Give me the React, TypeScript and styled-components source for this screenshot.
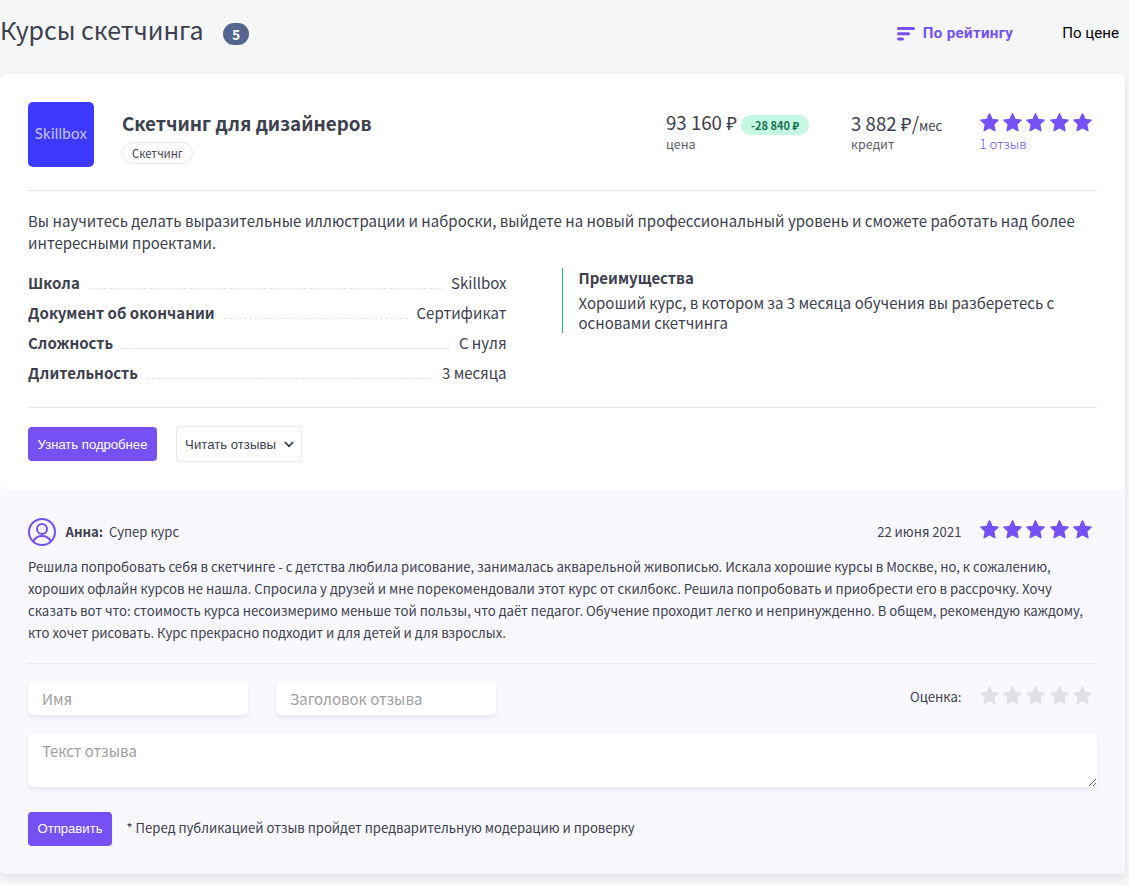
import React from 'react';
import styled, { createGlobalStyle } from 'styled-components';

const SANS = '"Noto Sans CJK SC", "Noto Sans", sans-serif';
const ARIAL = '"Liberation Sans", Arial, sans-serif';
const ACCENT = '#7551f5';
const TEXT = '#3d404e';

const GlobalStyle = createGlobalStyle`
  * { box-sizing: border-box; }
  body {
    margin: 0;
    background: #f4f6f8;
    color: ${TEXT};
    font-family: ${SANS};
    font-size: 15px;
    overflow: hidden;
  }
  h1, h2, h3, p, dl, dd, dt { margin: 0; }
  button, input, textarea { font: inherit; border: 0; margin: 0; outline: none; }
`;

const Page = styled.main`
  width: 1129px;
  height: 885px;
  overflow: hidden;
`;

const TopBar = styled.header`
  display: flex;
  align-items: center;
  height: 74px;
  padding: 0 10px 12px 0;
`;

const PageTitle = styled.h1`
  margin-bottom: 4px;
  font-weight: 400;
  font-size: 24.9px;
  line-height: 36px;
  white-space: nowrap;
`;

const Count = styled.span`
  margin: 6px 0 0 19.5px;
  width: 26px;
  height: 22px;
  border-radius: 11px;
  background: #54658f;
  color: #fff;
  font-weight: 700;
  font-size: 14px;
  line-height: 23px;
  text-align: center;
`;

const SortBar = styled.nav`
  display: flex;
  align-items: center;
  gap: 49px;
  margin-left: auto;
  padding-top: 5px;
`;

const SortOption = styled.span<{ $active?: boolean }>`
  display: flex;
  align-items: center;
  gap: 8px;
  font-family: Roboto, sans-serif;
  font-size: 15.1px;
  letter-spacing: ${p => (p.$active ? 0.32 : 0)}px;
  font-weight: ${p => (p.$active ? 700 : 400)};
  line-height: 20px;
  color: ${p => (p.$active ? ACCENT : '#000')};
`;

const SortLabel = styled.span`
  padding-bottom: 2px;
`;

const Panel = styled.section`
  width: 1125px;
  border-radius: 6px;
  box-shadow: 0 3px 8px rgba(40, 45, 60, 0.1);
`;

const Course = styled.article`
  height: 416px;
  padding: 28px 28px 0;
  background: #fff;
  border-radius: 6px;
`;

const Reviews = styled.section`
  height: 384px;
  padding: 28px 28px 0;
  background: #f9f8ff;
  border-radius: 0 0 6px 6px;
`;

const CourseHead = styled.div`
  display: flex;
  height: 89px;
  border-bottom: 1px solid #e8e8ea;
`;

const Logo = styled.div`
  display: flex;
  align-items: center;
  justify-content: center;
  width: 66px;
  height: 65px;
  padding-bottom: 3px;
  border-radius: 5px;
  background: #3e39ff;
  color: #c6c4ff;
  font-family: Lato, sans-serif;
  font-size: 15px;
  letter-spacing: 0.25px;
`;

const CourseName = styled.div`
  width: 572px;
  padding: 7px 0 0 28px;
`;

const CourseTitle = styled.h2`
  font-weight: 700;
  font-size: 18.75px;
  line-height: 28px;
`;

const Chip = styled.span`
  display: block;
  width: 71px;
  height: 22px;
  margin-top: 5px;
  border: 1px solid #e8e8ea;
  border-radius: 11px;
  font-size: 11.3px;
  line-height: 20px;
  text-align: center;
`;

const Cost = styled.div<{ $width: number }>`
  width: ${p => p.$width}px;
  padding-top: 7px;
`;

const Amount = styled.div<{ $raised?: boolean }>`
  display: flex;
  align-items: baseline;
  font-size: 18.67px;
  line-height: ${p => (p.$raised ? 26 : 28)}px;
  height: 26px;
  white-space: nowrap;
`;

const Unit = styled.span`
  font-size: 13.1px;
`;

const Discount = styled.span`
  align-self: center;
  margin: 5px 0 0 4px;
  width: 68px;
  height: 20px;
  border-radius: 10px;
  background: #c6f7e2;
  color: #147350;
  font-weight: 700;
  font-size: 11px;
  line-height: 20px;
  text-align: center;
`;

const Caption = styled.div<{ $link?: boolean }>`
  margin-top: ${p => (p.$link ? 3 : 0)}px;
  font-size: ${p => (p.$link ? 13.15 : 12.5)}px;
  font-weight: ${p => (p.$link ? 300 : 400)};
  line-height: 18px;
  color: ${p => (p.$link ? ACCENT : '#5d606c')};
`;

const Rating = styled.div`
  padding: 11px 0 0 0.6px;
`;

const StarRow = styled.div`
  display: flex;
  gap: 4.35px;
  height: 19px;
`;

const Description = styled.p`
  margin-top: 19px;
  line-height: 22px;
  height: 44px;
`;

const Details = styled.div`
  display: flex;
  align-items: flex-start;
  justify-content: space-between;
  height: 154px;
  padding-top: 14px;
  border-bottom: 1px solid #e8e8ea;
`;

const Facts = styled.dl`
  width: 478.5px;
`;

const Fact = styled.div`
  display: flex;
  line-height: 30px;
  height: 30px;
`;

const FactName = styled.dt`
  font-weight: 700;
`;

const Leader = styled.span`
  flex: 1;
  height: 21px;
  margin: 0 9px;
  border-bottom: 1px dashed #e3e4e7;
`;

const Benefits = styled.div`
  width: 535px;
  height: 65px;
  padding-left: 15.5px;
  border-left: 1px solid #25b885;
  line-height: 20px;
`;

const BenefitsTitle = styled.h3`
  font-size: 15px;
  line-height: 20px;
  margin-bottom: 5px;
`;

const Actions = styled.div`
  display: flex;
  align-items: center;
  gap: 19px;
  padding-top: 18px;
`;

const PrimaryButton = styled.button<{ $width: number }>`
  width: ${p => p.$width}px;
  height: 34px;
  padding: ${p => (p.$width > 100 ? '1px 0 0' : '0 0 1px')};
  border-radius: 4px;
  background: ${ACCENT};
  color: #fff;
  font-family: ${ARIAL};
  font-size: 13.1px;
`;

const OutlineButton = styled.button`
  display: flex;
  align-items: center;
  justify-content: center;
  gap: 8px;
  width: 126px;
  height: 36px;
  padding: 0 0 0 1px;
  border: 1px solid #e8e8ea;
  border-radius: 4px;
  background: #fff;
  color: ${TEXT};
  font-family: ${ARIAL};
  font-size: 13.2px;
`;

const ReviewHead = styled.div`
  display: flex;
  align-items: center;
  height: 28px;
  font-size: 13.1px;
`;

const Line = styled.span`
  padding-bottom: 2px;
`;

const Author = styled(Line)`
  margin: 0 6px 0 9.5px;
  font-weight: 700;
`;

const Note = styled.span`
  padding-bottom: 3px;
`;

const RightSide = styled.div<{ $starLift: number }>`
  display: flex;
  align-items: center;
  gap: 18.2px;
  margin-left: auto;
  padding-right: 5px;
  font-size: 13.1px;

  ${StarRow} { margin-bottom: ${p => p.$starLift}px; }
`;

const ReviewText = styled.p`
  height: 118px;
  padding-top: 10px;
  border-bottom: 1px solid #e8e8ee;
  font-size: 13.15px;
  line-height: 22px;
`;

const FieldRow = styled.div`
  display: flex;
  gap: 28px;
  padding-top: 18px;

  ${RightSide} { height: 30px; }
`;

const fieldLook = `
  display: block;
  border-radius: 5px;
  background: #fff;
  box-shadow: 0 3px 5px rgba(40, 45, 60, 0.08);
  color: ${TEXT};
  font-size: 15px;
  &::placeholder { color: #a0a0a0; opacity: 1; }
`;

const Field = styled.input`
  ${fieldLook}
  width: 220px;
  height: 33px;
  padding: 0 14px;
`;

const TextField = styled.textarea`
  ${fieldLook}
  width: 1069px;
  height: 53px;
  margin-top: 19px;
  padding: 7px 14px;
  line-height: 20px;
`;

const SubmitRow = styled.div`
  display: flex;
  align-items: center;
  gap: 14.5px;
  padding-top: 25px;
  font-size: 13.12px;
`;

const Star = ({ color }: { color: string }) => (
  <svg width="19" height="19" viewBox="0 0 19 19">
    <path
      fill={color}
      stroke={color}
      strokeLinejoin="round"
      strokeWidth="1.4"
      d="M9.5 .9 L12 6.4 L18.2 7.1 L13.7 11.3 L14.9 17.6 L9.5 14.7 L4.1 17.6 L5.3 11.3 L.8 7.1 L7 6.4Z"
    />
  </svg>
);

const Stars = ({ color = ACCENT }: { color?: string }) => (
  <StarRow>
    {[1, 2, 3, 4, 5].map(n => <Star key={n} color={color} />)}
  </StarRow>
);

const SortIcon = () => (
  <svg width="18" height="14" viewBox="0 0 18 14" stroke={ACCENT} strokeWidth="3" strokeLinecap="round">
    <path d="M1.5 1.5H16.5M1.5 6.8H11.5M1.5 12H5.5" />
  </svg>
);

const Chevron = () => (
  <svg width="10" height="7" viewBox="0 0 10 7" fill="none" stroke="#33404a" strokeWidth="1.7">
    <path d="M.8 1 5 5.2 9.2 1" />
  </svg>
);

const Avatar = () => (
  <svg width="28" height="28" viewBox="0 0 28 28" fill="none" stroke={ACCENT} strokeWidth="2">
    <circle cx="14" cy="14" r="13" />
    <circle cx="14" cy="11" r="5" />
    <path d="M5 23.2C7 19.8 10.2 18 14 18s7 1.8 9 5.2" />
  </svg>
);

const facts = [
  ['Школа', 'Skillbox'],
  ['Документ об окончании', 'Сертификат'],
  ['Сложность', 'С нуля'],
  ['Длительность', '3 месяца'],
];

export default function App() {
  return (
    <Page>
      <GlobalStyle />
      <TopBar>
        <PageTitle>Курсы скетчинга</PageTitle>
        <Count>5</Count>
        <SortBar>
          <SortOption $active><SortIcon /><SortLabel>По рейтингу</SortLabel></SortOption>
          <SortOption><SortLabel>По цене</SortLabel></SortOption>
        </SortBar>
      </TopBar>
      <Panel>
        <Course>
          <CourseHead>
            <Logo>Skillbox</Logo>
            <CourseName>
              <CourseTitle>Скетчинг для дизайнеров</CourseTitle>
              <Chip>Скетчинг</Chip>
            </CourseName>
            <Cost $width={185}>
              <Amount $raised>93 160 ₽<Discount>-28 840 ₽</Discount></Amount>
              <Caption>цена</Caption>
            </Cost>
            <Cost $width={128}>
              <Amount>3 882 ₽/<Unit>мес</Unit></Amount>
              <Caption>кредит</Caption>
            </Cost>
            <Rating>
              <Stars />
              <Caption $link>1 отзыв</Caption>
            </Rating>
          </CourseHead>
          <Description>
            Вы научитесь делать выразительные иллюстрации и наброски, выйдете на новый профессиональный
            уровень и сможете работать над более интересными проектами.
          </Description>
          <Details>
            <Facts>
              {facts.map(([name, value]) => (
                <Fact key={name}>
                  <FactName>{name}</FactName>
                  <Leader />
                  <dd>{value}</dd>
                </Fact>
              ))}
            </Facts>
            <Benefits>
              <BenefitsTitle>Преимущества</BenefitsTitle>
              <p>Хороший курс, в котором за 3 месяца обучения вы разберетесь с основами скетчинга</p>
            </Benefits>
          </Details>
          <Actions>
            <PrimaryButton $width={129}>Узнать подробнее</PrimaryButton>
            <OutlineButton>Читать отзывы<Chevron /></OutlineButton>
          </Actions>
        </Course>
        <Reviews>
          <ReviewHead>
            <Avatar />
            <Author>Анна:</Author>
            <Line>Супер курс</Line>
            <RightSide $starLift={5}><Line>22 июня 2021</Line><Stars /></RightSide>
          </ReviewHead>
          <ReviewText>
            Решила попробовать себя в скетчинге - с детства любила рисование, занималась акварельной
            живописью. Искала хорошие курсы в Москве, но, к сожалению, хороших офлайн курсов не нашла.
            Спросила у друзей и мне порекомендовали этот курс от скилбокс. Решила попробовать и
            приобрести его в рассрочку. Хочу сказать вот что: стоимость курса несоизмеримо меньше той
            пользы, что даёт педагог. Обучение проходит легко и непринужденно. В общем, рекомендую
            каждому, кто хочет рисовать. Курс прекрасно подходит и для детей и для взрослых.
          </ReviewText>
          <FieldRow>
            <Field placeholder="Имя" />
            <Field placeholder="Заголовок отзыва" />
            <RightSide $starLift={3}><Line>Оценка:</Line><Stars color="#e1e1e3" /></RightSide>
          </FieldRow>
          <TextField placeholder="Текст отзыва" />
          <SubmitRow>
            <PrimaryButton $width={84}>Отправить</PrimaryButton>
            <Note>* Перед публикацией отзыв пройдет предварительную модерацию и проверку</Note>
          </SubmitRow>
        </Reviews>
      </Panel>
    </Page>
  );
}
